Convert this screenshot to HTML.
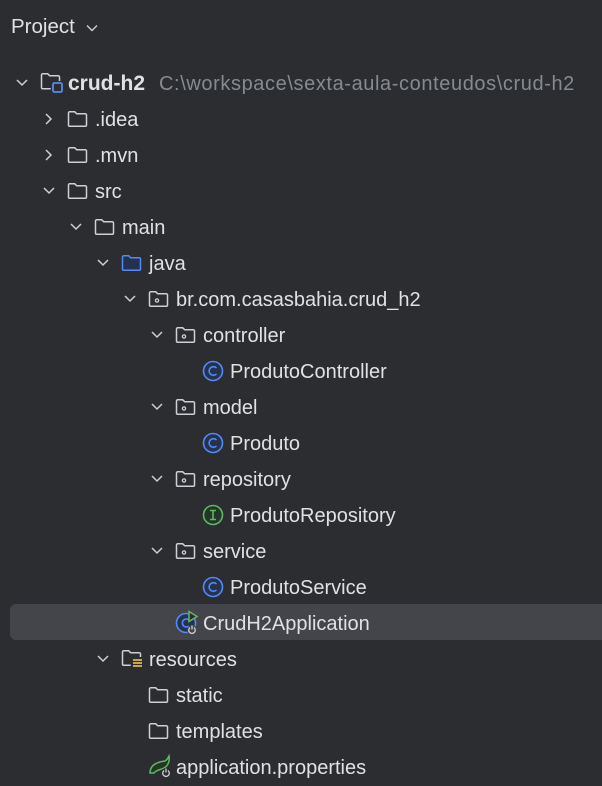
<!DOCTYPE html><html><head><style>
body{margin:0;width:602px;height:785px;background:#2b2d30;overflow:hidden;font-family:"Liberation Sans",sans-serif;color:#dfe1e5;position:relative}
.r{position:absolute;left:0;height:36px;width:602px}
.r .t{position:absolute;top:1px;line-height:36px;font-size:20px;white-space:nowrap}
.r svg{position:absolute}
.sel{position:absolute;left:10px;top:604px;width:600px;height:36px;background:#43454a;border-radius:6px}
</style></head><body>
<div style="position:absolute;left:11px;top:13px;font-size:20.5px;line-height:28px;color:#dfe1e5">Project <svg width="14" height="10" style="margin-left:4px" viewBox="0 0 14 10"><path d="M2 2.5l5 5 5-5" stroke="#ced0d6" stroke-width="1.4" fill="none"/></svg></div>
<div class="sel"></div>
<svg width="0" height="0" style="position:absolute"><defs>
<g id="dn"><path d="M1 1l5 5 5-5" stroke="#ced0d6" stroke-width="1.5" fill="none"/></g>
<g id="rt"><path d="M1 1l5 5-5 5" stroke="#ced0d6" stroke-width="1.5" fill="none"/></g>
<g id="fd"><path d="M1.5 3a1.2 1.2 0 0 1 1.2-1.2h5l2 2h8.6a1.2 1.2 0 0 1 1.2 1.2v10a1.2 1.2 0 0 1-1.2 1.2H2.7a1.2 1.2 0 0 1-1.2-1.2z" stroke="#ced0d6" stroke-width="1.5" fill="none"/></g>
<g id="pk"><use href="#fd"/><circle cx="9" cy="10.5" r="1.6" stroke="#ced0d6" stroke-width="1.3" fill="none"/></g>
</defs></svg>
<div class="r" style="top:65px"><svg width="12" height="8" style="left:16px;top:14px"><use href="#dn"/></svg>
<svg width="24" height="22" style="left:40px;top:7px"><path d="M1.5 3a1.2 1.2 0 0 1 1.2-1.2h5l2 2h8.6a1.2 1.2 0 0 1 1.2 1.2v4M1.5 3v12.5a1.2 1.2 0 0 0 1.2 1.2h8" stroke="#ced0d6" stroke-width="1.5" fill="none"/><rect x="13" y="11" width="9" height="9" rx="1.5" stroke="#548af7" stroke-width="1.8" fill="none"/></svg>
<span class="t" style="left:68px;font-weight:bold;font-size:21px">crud-h2</span><span class="t" style="left:159px;color:#868a91;letter-spacing:0.6px">C:\workspace\sexta-aula-conteudos\crud-h2</span></div>
<div class="r" style="top:101px"><svg width="12" height="12" style="left:45px;top:12px"><use href="#rt"/></svg><svg width="22" height="18" style="left:67px;top:9px"><use href="#fd"/></svg><span class="t" style="left:95px">.idea</span></div>
<div class="r" style="top:137px"><svg width="12" height="12" style="left:45px;top:12px"><use href="#rt"/></svg><svg width="22" height="18" style="left:67px;top:9px"><use href="#fd"/></svg><span class="t" style="left:95px">.mvn</span></div>
<div class="r" style="top:173px"><svg width="12" height="8" style="left:43px;top:14px"><use href="#dn"/></svg><svg width="22" height="18" style="left:67px;top:9px"><use href="#fd"/></svg><span class="t" style="left:95px">src</span></div>
<div class="r" style="top:209px"><svg width="12" height="8" style="left:70px;top:14px"><use href="#dn"/></svg><svg width="22" height="18" style="left:94px;top:9px"><use href="#fd"/></svg><span class="t" style="left:122px">main</span></div>
<div class="r" style="top:245px"><svg width="12" height="8" style="left:97px;top:14px"><use href="#dn"/></svg><svg width="22" height="18" style="left:121px;top:9px"><path d="M1.5 3a1.2 1.2 0 0 1 1.2-1.2h5l2 2h8.6a1.2 1.2 0 0 1 1.2 1.2v10a1.2 1.2 0 0 1-1.2 1.2H2.7a1.2 1.2 0 0 1-1.2-1.2z" stroke="#548af7" stroke-width="1.5" fill="#25324d"/></svg><span class="t" style="left:149px">java</span></div>
<div class="r" style="top:281px"><svg width="12" height="8" style="left:124px;top:14px"><use href="#dn"/></svg><svg width="22" height="18" style="left:148px;top:9px"><use href="#pk"/></svg><span class="t" style="left:176px">br.com.casasbahia.crud_h2</span></div>
<div class="r" style="top:317px"><svg width="12" height="8" style="left:151px;top:14px"><use href="#dn"/></svg><svg width="22" height="18" style="left:175px;top:9px"><use href="#pk"/></svg><span class="t" style="left:203px">controller</span></div>
<div class="r" style="top:353px"><svg width="22" height="22" style="left:202px;top:7px"><circle cx="11" cy="11" r="9.5" stroke="#548af7" stroke-width="1.6" fill="#25324d"/><path d="M14.5 8a4.3 4.3 0 1 0 0 6" stroke="#548af7" stroke-width="1.6" fill="none"/></svg><span class="t" style="left:230px">ProdutoController</span></div>
<div class="r" style="top:389px"><svg width="12" height="8" style="left:151px;top:14px"><use href="#dn"/></svg><svg width="22" height="18" style="left:175px;top:9px"><use href="#pk"/></svg><span class="t" style="left:203px">model</span></div>
<div class="r" style="top:425px"><svg width="22" height="22" style="left:202px;top:7px"><circle cx="11" cy="11" r="9.5" stroke="#548af7" stroke-width="1.6" fill="#25324d"/><path d="M14.5 8a4.3 4.3 0 1 0 0 6" stroke="#548af7" stroke-width="1.6" fill="none"/></svg><span class="t" style="left:230px">Produto</span></div>
<div class="r" style="top:461px"><svg width="12" height="8" style="left:151px;top:14px"><use href="#dn"/></svg><svg width="22" height="18" style="left:175px;top:9px"><use href="#pk"/></svg><span class="t" style="left:203px">repository</span></div>
<div class="r" style="top:497px"><svg width="22" height="22" style="left:202px;top:7px"><circle cx="11" cy="11" r="9.5" stroke="#5fb865" stroke-width="1.6" fill="#253627"/><path d="M8 6.5h6M8 15.5h6M11 6.5v9" stroke="#5fb865" stroke-width="1.6"/></svg><span class="t" style="left:230px">ProdutoRepository</span></div>
<div class="r" style="top:533px"><svg width="12" height="8" style="left:151px;top:14px"><use href="#dn"/></svg><svg width="22" height="18" style="left:175px;top:9px"><use href="#pk"/></svg><span class="t" style="left:203px">service</span></div>
<div class="r" style="top:569px"><svg width="22" height="22" style="left:202px;top:7px"><circle cx="11" cy="11" r="9.5" stroke="#548af7" stroke-width="1.6" fill="#25324d"/><path d="M14.5 8a4.3 4.3 0 1 0 0 6" stroke="#548af7" stroke-width="1.6" fill="none"/></svg><span class="t" style="left:230px">ProdutoService</span></div>
<div class="r" style="top:605px"><svg width="26" height="26" style="left:175px;top:5px"><circle cx="11" cy="13" r="9.5" stroke="#548af7" stroke-width="1.6" fill="#25324d"/><path d="M14 10a4 4 0 1 0 0 6" stroke="#548af7" stroke-width="1.6" fill="none"/><path d="M14 1.5l8 5-8 5z" fill="#2b2d30" stroke="#5fb865" stroke-width="1.5"/><circle cx="17" cy="20" r="5" fill="#43454a"/><path d="M15 17.5a3.3 3.3 0 1 0 4 0M17 15.5v4" stroke="#ced0d6" stroke-width="1.3" fill="none"/></svg><span class="t" style="left:203px">CrudH2Application</span></div>
<div class="r" style="top:641px"><svg width="12" height="8" style="left:97px;top:14px"><use href="#dn"/></svg><svg width="24" height="22" style="left:121px;top:8px"><path d="M1.5 3a1.2 1.2 0 0 1 1.2-1.2h5l2 2h8.6a1.2 1.2 0 0 1 1.2 1.2v3M1.5 3v12a1.2 1.2 0 0 0 1.2 1.2h7" stroke="#ced0d6" stroke-width="1.5" fill="none"/><path d="M12 11h9M12 14h9M12 17h9" stroke="#e0b64a" stroke-width="1.8"/></svg><span class="t" style="left:149px">resources</span></div>
<div class="r" style="top:677px"><svg width="22" height="18" style="left:148px;top:9px"><use href="#fd"/></svg><span class="t" style="left:176px">static</span></div>
<div class="r" style="top:713px"><svg width="22" height="18" style="left:148px;top:9px"><use href="#fd"/></svg><span class="t" style="left:176px">templates</span></div>
<div class="r" style="top:749px"><svg width="26" height="26" style="left:148px;top:5px"><path d="M2 19c0-8 7-11 15-12 2-1 3-3 4-5 1 5-1 10-5 12-4 2-8 2-10 5z" stroke="#5fb865" stroke-width="1.5" fill="#253627"/><circle cx="18" cy="19" r="5" fill="#2b2d30"/><path d="M16 16.5a3.3 3.3 0 1 0 4 0M18 14.5v4" stroke="#ced0d6" stroke-width="1.3" fill="none"/></svg><span class="t" style="left:176px">application.properties</span></div>
</body></html>
